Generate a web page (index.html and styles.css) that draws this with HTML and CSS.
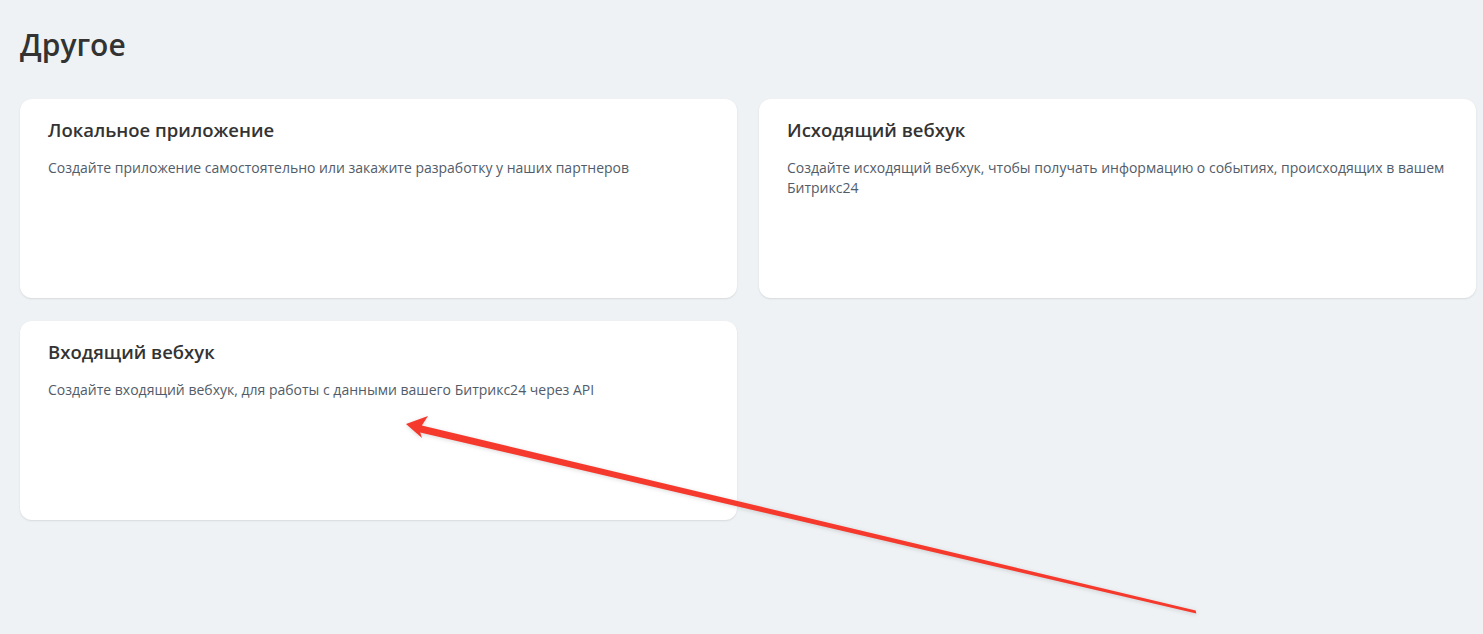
FILE: index.html
```html
<!DOCTYPE html>
<html lang="ru">
<head>
<meta charset="utf-8">
<title>Другое</title>
<link rel="stylesheet" href="styles.css">
</head>
<body>
<main class="page">
  <h1 class="page-title">Другое</h1>
  <div class="grid">
    <section class="card">
      <h2 class="card-title">Локальное приложение</h2>
      <p class="card-text">Создайте приложение самостоятельно или закажите разработку у наших партнеров</p>
    </section>
    <section class="card">
      <h2 class="card-title">Исходящий вебхук</h2>
      <p class="card-text">Создайте исходящий вебхук, чтобы получать информацию о событиях, происходящих в вашем Битрикс24</p>
    </section>
    <section class="card">
      <h2 class="card-title">Входящий вебхук</h2>
      <p class="card-text">Создайте входящий вебхук, для работы с данными вашего Битрикс24 через API</p>
    </section>
  </div>
</main>
<svg class="pointer" width="1483" height="634" viewBox="0 0 1483 634" aria-hidden="true">
  <polygon points="406,424 428,416 421.8,425.6 1195.7,610.5 1196.3,613.6 420.2,432.4 422,438" fill="#f5392d"/>
</svg>
</body>
</html>
```
FILE: styles.css
```css
html, body {
  margin: 0;
  padding: 0;
}

body {
  background: #eef2f4;
  font-family: "Open Sans", "Noto Sans", sans-serif;
  color: #333;
  width: 1483px;
  height: 634px;
  overflow: hidden;
  position: relative;
}

.page {
  padding: 23px 7px 0 20px;
}

.page-title {
  margin: 0 0 33px;
  font-size: 30px;
  font-weight: 600;
  line-height: 43px;
  color: #333;
}

.grid {
  display: grid;
  grid-template-columns: 717px 717px;
  column-gap: 22px;
  row-gap: 23px;
}

.card {
  background: #fff;
  border-radius: 12px;
  height: 199px;
  box-sizing: border-box;
  padding: 18px 28px 0 28px;
  box-shadow: 0 1px 2px rgba(0, 0, 0, 0.1);
}

.card-title {
  margin: 0;
  font-size: 18.5px;
  font-weight: 600;
  line-height: 26px;
  color: #333;
}

.card-text {
  margin: 15px 0 0;
  font-size: 14px;
  line-height: 20px;
  color: #525c69;
}

.pointer {
  position: absolute;
  left: 0;
  top: 0;
  pointer-events: none;
  filter: drop-shadow(0 1px 2px rgba(0, 0, 0, 0.15));
}
```
